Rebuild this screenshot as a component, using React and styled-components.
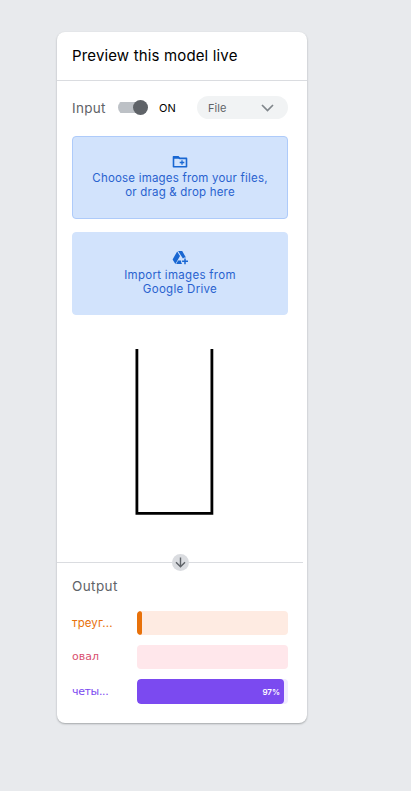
import React from "react";
import styled, { createGlobalStyle } from "styled-components";

const GlobalStyle = createGlobalStyle`
  *, *::before, *::after { box-sizing: border-box; }
  body {
    margin: 0;
    background: #e8eaed;
    font-family: Inter, "Noto Sans", sans-serif;
    color: #000;
  }
`;

const Page = styled.main`
  min-height: 791px;
  padding: 32px 0 0 57px;
  background: #e8eaed;
`;

const Card = styled.section`
  width: 250px;
  height: 691px;
  display: flex;
  flex-direction: column;
  background: #fff;
  border-radius: 8px;
  box-shadow: 0 1px 2px rgba(60, 64, 67, 0.4);
`;

const Header = styled.header`
  height: 49px;
  padding-left: 15px;
  border-bottom: 1px solid #dadce0;
`;

const Title = styled.h1`
  margin: 0;
  font-size: 15px;
  line-height: 47px;
  font-weight: 400;
  letter-spacing: 0.15px;
  white-space: nowrap;
`;

const InputSection = styled.div`
  height: 481px;
  padding: 15px 19px 0 15px;
  display: flex;
  flex-direction: column;
`;

const Controls = styled.div`
  height: 23px;
  display: flex;
  align-items: center;
  margin-bottom: 17px;
`;

const SectionLabel = styled.h2`
  margin: 0;
  width: ${(p) => p.$width};
  font-size: 13.5px;
  line-height: 20px;
  font-weight: 400;
  letter-spacing: ${(p) => p.$spacing};
  color: #5f6368;
`;

const Switch = styled.button`
  width: 30px;
  height: 15px;
  padding: 0;
  border: 0;
  background: linear-gradient(#bdc1c6, #bdc1c6) 0 center / 28px 11px no-repeat;
  border-radius: 8px;
  display: flex;
  justify-content: flex-end;
`;

const Knob = styled.span`
  width: 15px;
  height: 15px;
  border-radius: 50%;
  background: #5f6368;
`;

const SwitchState = styled.span`
  margin-left: 11px;
  font-size: 11px;
  line-height: 16px;
`;

const Select = styled.button`
  width: 91px;
  height: 23px;
  margin-left: auto;
  padding: 0 14px 0 11px;
  display: flex;
  align-items: center;
  justify-content: space-between;
  border: 0;
  border-radius: 12px;
  background: #f1f3f4;
  color: #5f6368;
  font: 400 11px/16px Inter, sans-serif;
  letter-spacing: 0.1px;
`;

const Source = styled.button`
  height: 83px;
  flex: none;
  margin: 0 0 13px;
  padding: 17px 0 0;
  display: flex;
  flex-direction: column;
  align-items: center;
  border: 1px solid ${(p) => (p.$outlined ? "#aecbfa" : "#d2e3fc")};
  border-radius: 4px;
  background: #d2e3fc;
  color: #2962cf;
  font: 400 11.5px/14px Inter, sans-serif;
  letter-spacing: ${(p) => p.$spacing};
  white-space: nowrap;

  svg { margin-bottom: ${(p) => (p.$outlined ? "1px" : "2px")}; flex: none; }
`;

const Preview = styled.svg`
  display: block;
  margin: 21px 0 0 63px;
  flex: none;
`;

const Divider = styled.div`
  display: flex;
  align-items: center;
  width: 246px;
  height: 17px;
  margin-top: -8px;

  &::before, &::after { content: ""; height: 1px; background: #dadce0; }
  &::before { width: 115px; }
  &::after { flex: 1; }
`;

const Output = styled.div`
  padding: 5px 19px 0 15px;
`;

const Results = styled.div`
  margin-top: 15px;
  display: grid;
  row-gap: 10px;
`;

const Result = styled.div`
  height: ${(p) => p.$height};
  display: grid;
  grid-template-columns: 65px 151px;
  align-items: center;
`;

const ResultName = styled.span`
  font: 400 ${(p) => p.$size}/20px ${(p) => p.$font};
  letter-spacing: ${(p) => p.$spacing};
  color: ${(p) => p.$color};
`;

const Track = styled.div`
  height: 100%;
  overflow: hidden;
  border-radius: 4px;
  background: ${(p) => p.$color};
`;

const Fill = styled.div`
  height: 100%;
  display: flex;
  align-items: center;
  justify-content: flex-end;
  padding-right: ${(p) => (p.$labelled ? "4px" : "0")};
  border-radius: 4px;
  background: ${(p) => p.$color};
  color: #fff;
  font-size: 8px;
  font-weight: 600;
`;

const results = [
  { name: "треуг...", color: "#e8710a", track: "#feebe2", width: 5, height: "24px", font: "Inter, sans-serif", size: "11.5px", spacing: "0.1px" },
  { name: "овал", color: "#d94f70", track: "#ffe7eb", width: 0, height: "24px", font: '"DejaVu Sans", sans-serif', size: "11px", spacing: "0" },
  { name: "четы...", color: "#7b4af0", track: "#f0ebff", width: 147, height: "25px", label: "97%", font: '"DejaVu Sans", sans-serif', size: "11px", spacing: "-0.35px" },
];

const FolderIcon = () => (
  <svg width="16" height="16" viewBox="0 0 16 16">
    <path d="M1.5 3.5v9.2h13V4.4H7.7L6.1 2.8H1.5z" fill="none" stroke="#1967d2" strokeWidth="1.6" strokeLinejoin="round" />
    <path d="M1.5 2.2h4.8l1.8 2.5H1.5z" fill="#1967d2" />
    <path d="M10 6.2v4.6M7.7 8.5h4.6" stroke="#1967d2" strokeWidth="1.3" />
  </svg>
);

const DriveIcon = () => (
  <svg width="16" height="16" viewBox="0 0 16 16">
    <path d="M5.2 1.4 8 6.1 3.4 14 .6 9.4z" fill="#1967d2" />
    <path d="M6.1 1.1h4.1l3.7 6.4c-1.4-.1-2.3.3-3 1.1z" fill="#1967d2" />
    <path d="M6.1 10.4h3c-.1 1.4.2 2.6 1 3.6H4.2z" fill="#1967d2" />
    <path d="M13 8.4v5.8M10.1 11.3H16" stroke="#1967d2" strokeWidth="1.5" />
  </svg>
);

export default function App() {
  return (
    <Page>
      <GlobalStyle />
      <Card>
        <Header>
          <Title>Preview this model live</Title>
        </Header>
        <InputSection>
          <Controls>
            <SectionLabel $width="46px" $spacing="0.3px">Input</SectionLabel>
            <Switch role="switch" aria-checked="true" aria-label="Input">
              <Knob />
            </Switch>
            <SwitchState>ON</SwitchState>
            <Select>
              File
              <svg width="13" height="8" viewBox="0 0 13 8">
                <path d="m1 1 5.5 5.5L12 1" fill="none" stroke="#80868b" strokeWidth="1.7" />
              </svg>
            </Select>
          </Controls>
          <Source $outlined $spacing="0.2px">
            <FolderIcon />
            <span>Choose images from your files,</span>
            <span>or drag &amp; drop here</span>
          </Source>
          <Source $spacing="0.3px">
            <DriveIcon />
            <span>Import images from</span>
            <span>Google Drive</span>
          </Source>
          <Preview width="79" height="166" viewBox="0 0 79 166">
            <path d="M1.9 0v164.4h75V0" fill="none" stroke="#000" strokeWidth="2.8" />
          </Preview>
        </InputSection>
        <Divider>
          <svg width="17" height="17" viewBox="0 0 17 17">
            <circle cx="8.5" cy="8.5" r="8.5" fill="#dadce0" />
            <path d="M8.5 3.6v9M4 8.2l4.5 4.6L13 8.2" fill="none" stroke="#5f6368" strokeWidth="1.4" />
          </svg>
        </Divider>
        <Output>
          <SectionLabel $width="auto" $spacing="0.4px">Output</SectionLabel>
          <Results>
            {results.map((r) => (
              <Result key={r.name} $height={r.height}>
                <ResultName $color={r.color} $font={r.font} $size={r.size} $spacing={r.spacing}>{r.name}</ResultName>
                <Track $color={r.track}>
                  <Fill $color={r.color} $labelled={Boolean(r.label)} style={{ width: r.width }}>{r.label}</Fill>
                </Track>
              </Result>
            ))}
          </Results>
        </Output>
      </Card>
    </Page>
  );
}
